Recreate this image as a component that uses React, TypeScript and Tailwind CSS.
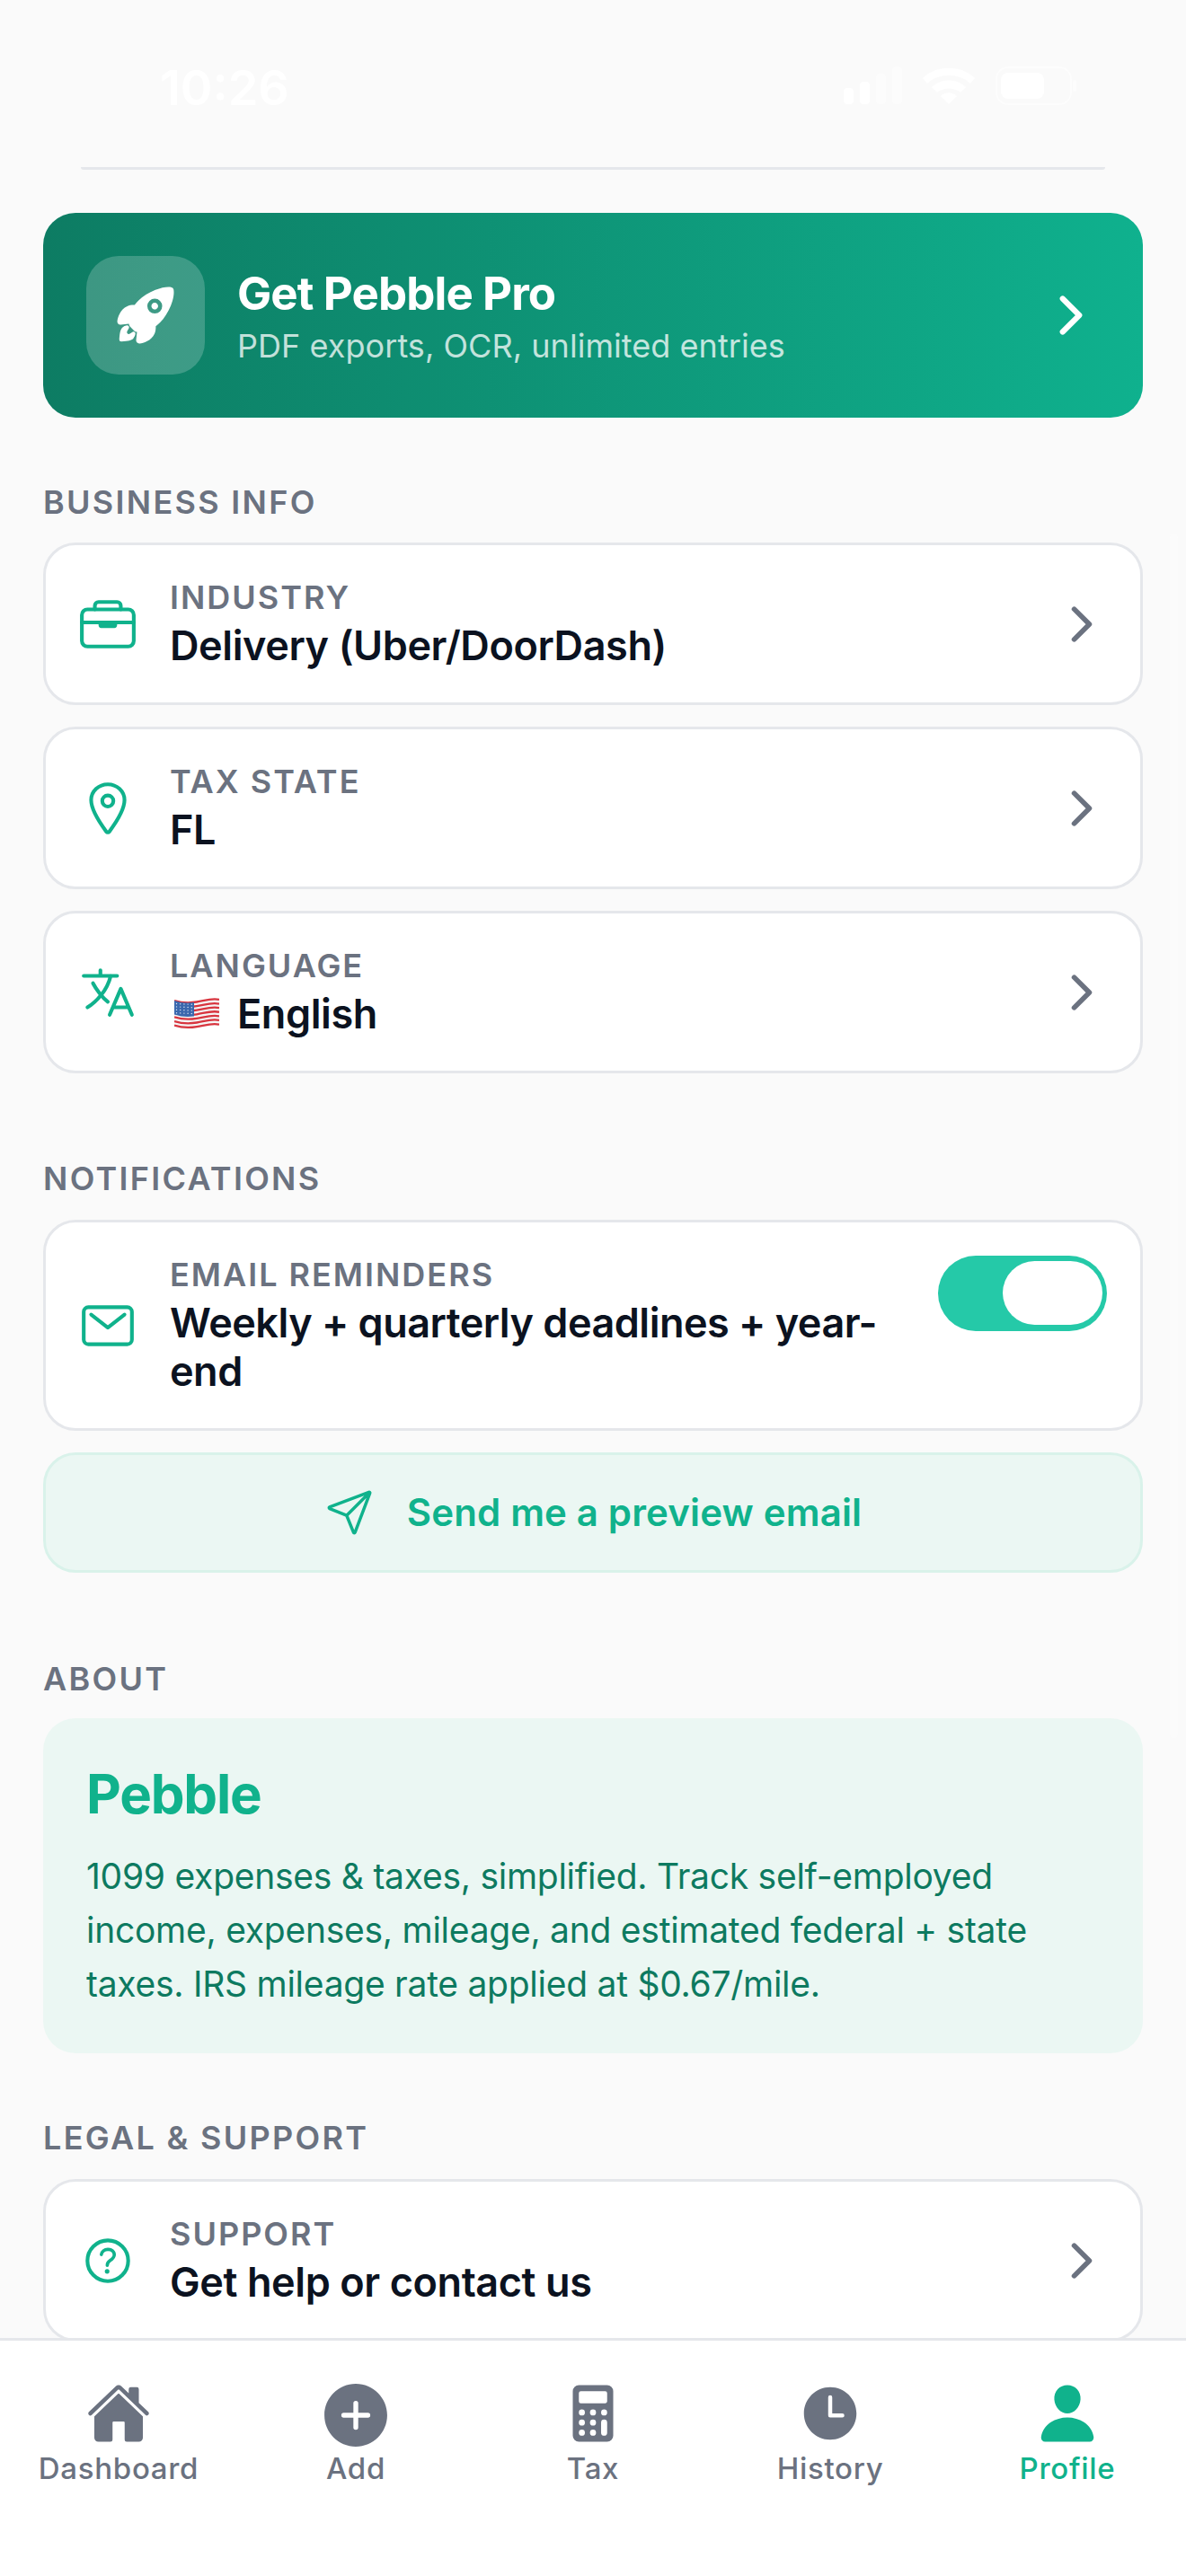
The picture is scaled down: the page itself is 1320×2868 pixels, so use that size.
import type { ReactNode } from "react";
import {
  IoAddCircle,
  IoBriefcaseOutline,
  IoCalculator,
  IoChevronForward,
  IoHelpCircleOutline,
  IoHome,
  IoLanguageOutline,
  IoLocationOutline,
  IoMailOutline,
  IoPaperPlaneOutline,
  IoPerson,
  IoRocket,
  IoTime,
} from "react-icons/io5";

// status bar glyphs are white on the light page, only just visible
function StatusIcons() {
  return (
    <svg width="264" height="46" viewBox="0 0 264 46" className="text-white">
      <rect x="5" y="25" width="11" height="18" rx="4" fill="currentColor" />
      <rect x="23" y="18" width="11" height="25" rx="4" fill="currentColor" />
      <rect x="41" y="9" width="11" height="34" rx="4" fill="currentColor" opacity="0.4" />
      <rect x="59" y="1" width="11" height="42" rx="4" fill="currentColor" opacity="0.4" />
      <path
        d="M93 14 C108 -1 136 -1 151 14 L146 20 C134 8 110 8 98 20 Z M103 24 C113 14 131 14 141 24 L135 30 C128 24 116 24 109 30 Z M113 34 C118 29 126 29 131 34 L122 43 Z"
        fill="currentColor"
      />
      <rect x="175" y="2" width="83" height="41" rx="13" fill="none" stroke="currentColor" strokeWidth="2" opacity="0.5" />
      <rect x="180" y="8" width="48" height="29" rx="8" fill="currentColor" />
      <rect x="260" y="16" width="4" height="13" rx="2" fill="currentColor" opacity="0.5" />
    </svg>
  );
}

function UsFlag() {
  const offsets = [3, 7.6, 12.2, 16.8, 21.4, 26, 30.6];
  return (
    <svg width="50" height="35" viewBox="0 0 50 35" className="shrink-0">
      <path d="M0 3 C8 5.5 16 6 25 4.5 S42 0 50 2 V31 C42 29 34 30 25 33 S8 34.5 0 32 Z" fill="#f5f5f5" />
      {offsets.map((y) => (
        <path
          key={y}
          d={`M0 ${y} C8 ${y + 2.5} 16 ${y + 3} 25 ${y + 1.5} S42 ${y - 3} 50 ${y - 1}`}
          fill="none"
          stroke="#d8353f"
          strokeWidth="2.3"
        />
      ))}
      <path d="M0 3 C8 5.5 14 6 22 5 V20.5 C14 21.5 8 21 0 18.5 Z" fill="#3a67ad" />
      {[0, 1, 2, 3].map((row) =>
        [0, 1, 2, 3, 4].map((col) => (
          <circle key={`${row}-${col}`} cx={2.5 + col * 4.2} cy={6.5 + row * 3.4 + col * 0.2} r="0.7" fill="#dfe6f3" />
        )),
      )}
    </svg>
  );
}

function SectionTitle({ children, className }: { children: ReactNode; className: string }) {
  return (
    <h2 className={`h-10 text-[36px] leading-10 font-semibold tracking-[2.3px] text-[#6B7280] ${className}`}>
      {children}
    </h2>
  );
}

function InfoRow({ icon, label, children }: { icon: ReactNode; label: string; children: ReactNode }) {
  return (
    <div className="flex h-[181px] items-center rounded-[36px] border-[3px] border-[#E5E7EB] bg-white pl-[36px] pr-[35px]">
      <div className="flex w-[66px] shrink-0 justify-center text-[#10B28C]">{icon}</div>
      <div className="ml-[36px] min-w-0 flex-1">
        <p className="text-[36px] leading-[42px] font-semibold tracking-[2px] text-[#6B7280]">{label}</p>
        <div className="mt-[6px] flex items-center text-[45px] leading-[54px] font-semibold tracking-[-0.4px] text-[#0B1220]">
          {children}
        </div>
      </div>
      <IoChevronForward size={60} className="shrink-0 text-[#6B7280]" />
    </div>
  );
}

function NavItem({ icon, label, active }: { icon: ReactNode; label: string; active?: boolean }) {
  return (
    <div className={`flex flex-col items-center ${active ? "text-[#10B28C]" : "text-[#6B7280]"}`}>
      <div className="flex h-[77px] w-[90px] justify-center overflow-hidden">{icon}</div>
      <span className="text-[33px] leading-10 font-medium tracking-[0.7px]">{label}</span>
    </div>
  );
}

export default function App() {
  return (
    <div className="relative flex h-[2868px] w-[1320px] flex-col overflow-hidden bg-[#FAFAFA] font-['Inter',sans-serif]">
      {/* status bar */}
      <div className="flex h-[186px] shrink-0 items-start justify-between pl-[178px] pr-[122px] pt-[73px] text-white">
        <span className="text-[54px] leading-[50px] font-semibold">10:26</span>
        <StatusIcons />
      </div>

      {/* scroll indicator */}
      <div className="absolute right-[9px] top-[594px] h-[1341px] w-[9px] rounded-full bg-white/30" />

      <main className="min-h-0 flex-1 px-[48px]">
        {/* bottom edge of the card scrolled under the status bar */}
        <div className="mx-[42px] h-[3px] rounded-b-[3px] bg-[#E5E7EB]" />

        <div className="mt-[48px] flex h-[228px] items-center rounded-[36px] bg-gradient-to-r from-[#0D7C63] to-[#0FB18E] pl-[48px] pr-[47px]">
          <div className="flex h-[132px] w-[132px] shrink-0 items-center justify-center rounded-[36px] bg-white/20 text-white">
            <IoRocket size={72} />
          </div>
          <div className="ml-[38px] flex-1 pt-[3px]">
            <p className="-ml-[2px] text-[51px] leading-[60px] font-bold tracking-[-0.9px] text-white">Get Pebble Pro</p>
            <p className="-ml-[2px] mt-[4px] text-[36px] leading-[48px] tracking-[0.05px] text-white/75">PDF exports, OCR, unlimited entries</p>
          </div>
          <IoChevronForward size={66} className="shrink-0 text-white" />
        </div>

        <SectionTitle className="mt-[74px] mb-[25px]">BUSINESS INFO</SectionTitle>
        <div className="flex flex-col gap-[24px]">
          <InfoRow icon={<IoBriefcaseOutline size={66} />} label="INDUSTRY">
            Delivery (Uber/DoorDash)
          </InfoRow>
          <InfoRow icon={<IoLocationOutline size={66} />} label="TAX STATE">
            FL
          </InfoRow>
          <InfoRow icon={<IoLanguageOutline size={66} />} label="LANGUAGE">
            <span className="ml-[5px] mr-[20px] flex"><UsFlag /></span>
            English
          </InfoRow>
        </div>

        <SectionTitle className="mt-[97px] mb-[26px]">NOTIFICATIONS</SectionTitle>
        <div className="flex h-[235px] items-center rounded-[36px] border-[3px] border-[#E5E7EB] bg-white pl-[36px] pr-[37px]">
          <div className="flex w-[66px] shrink-0 justify-center text-[#10B28C]">
            <IoMailOutline size={66} />
          </div>
          <div className="ml-[36px] min-w-0 flex-1 pr-[24px]">
            <p className="text-[36px] leading-[42px] font-semibold tracking-[2px] text-[#6B7280]">EMAIL REMINDERS</p>
            <p className="mt-[6px] text-[45px] leading-[54px] font-semibold tracking-[-0.5px] text-[#0B1220]">
              Weekly + quarterly deadlines + year-end
            </p>
          </div>
          {/* switch, on */}
          <div className="mb-[72px] flex h-[84px] w-[188px] shrink-0 items-center justify-end rounded-[42px] bg-[#25C9A8] pr-[5px]">
            <div className="h-[71px] w-[111px] rounded-[36px] bg-white" />
          </div>
        </div>

        <button className="mt-[24px] flex h-[134px] w-full items-center justify-center gap-[36px] rounded-[36px] border-[3px] border-[#D9F2EA] bg-[#EBF7F3] text-[42px] leading-[60px] font-semibold tracking-[0.15px] text-[#10B28C]">
          <IoPaperPlaneOutline size={56} />
          Send me a preview email
        </button>

        <SectionTitle className="mt-[98px] mb-[24px]">ABOUT</SectionTitle>
        <div className="h-[373px] rounded-[36px] bg-[#EBF7F3] px-[48px] pt-[48px]">
          <p className="text-[60px] leading-[72px] font-bold tracking-[-1.2px] text-[#10B28C]">Pebble</p>
          <p className="mt-[26px] text-[39px] leading-[60px] tracking-[-0.26px] text-[#0D7A60]">
            1099 expenses &amp; taxes, simplified. Track self-employed income, expenses, mileage, and estimated federal + state taxes. IRS mileage rate applied at $0.67/mile.
          </p>
        </div>

        <SectionTitle className="mt-[74px] mb-[26px]">LEGAL &amp; SUPPORT</SectionTitle>
        <InfoRow icon={<IoHelpCircleOutline size={66} />} label="SUPPORT">
          Get help or contact us
        </InfoRow>
      </main>

      <nav className="z-10 grid h-[265px] shrink-0 grid-cols-5 border-t-[3px] border-[#E5E7EB] bg-white pt-[45px]">
        <NavItem icon={<IoHome size={72} />} label="Dashboard" />
        <NavItem icon={<IoAddCircle size={86} className="-mt-[5px] shrink-0" />} label="Add" />
        <NavItem icon={<IoCalculator size={72} />} label="Tax" />
        <NavItem icon={<IoTime size={72} />} label="History" />
        <NavItem icon={<IoPerson size={72} />} label="Profile" active />
      </nav>
    </div>
  );
}
